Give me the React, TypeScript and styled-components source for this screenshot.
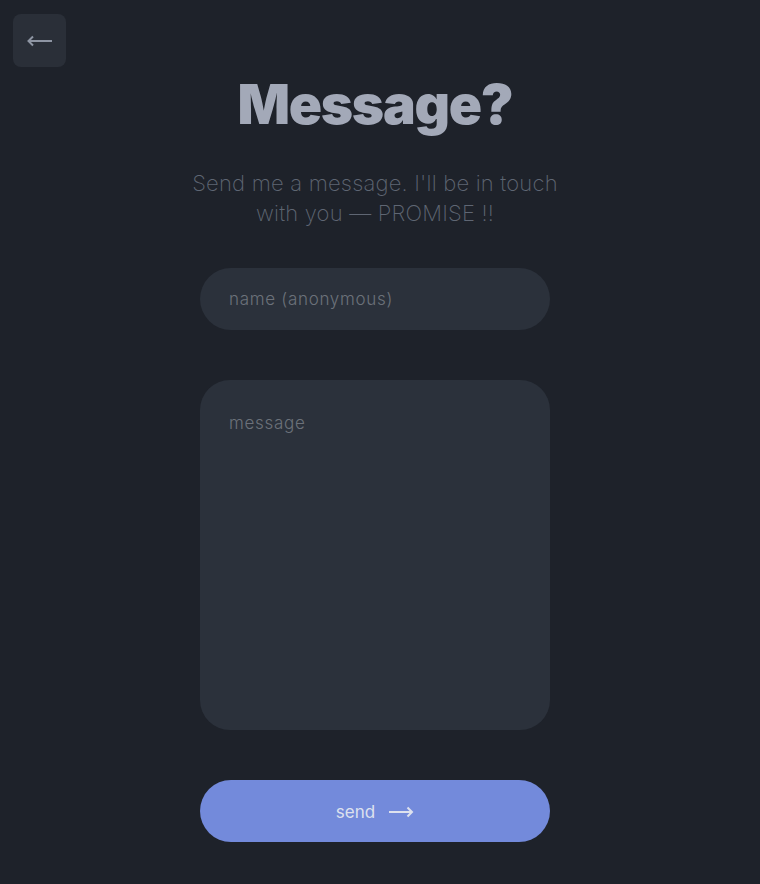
import React from "react";
import styled, { createGlobalStyle } from "styled-components";

const Global = createGlobalStyle`
  html, body { margin: 0; padding: 0; background: #1e222a; }
  body { font-family: Inter, "Noto Sans", sans-serif; }
  * { box-sizing: border-box; }
`;

const Page = styled.div`
  position: relative;
  width: 750px;
  min-height: 884px;
  display: flex;
  flex-direction: column;
  align-items: center;
  padding-top: 70px;
`;

const BackButton = styled.button`
  position: absolute;
  left: 13px;
  top: 14px;
  width: 53px;
  height: 53px;
  border: none;
  border-radius: 8px;
  background: #2a2f38;
  display: flex;
  align-items: center;
  justify-content: center;
  padding: 0;
  cursor: pointer;
`;

const Title = styled.h1`
  margin: 0;
  font-family: Inter, sans-serif;
  font-weight: 900;
  font-size: 55px;
  line-height: 68px;
  letter-spacing: -1.3px;
  color: #a3a9b8;
`;

const Subtitle = styled.p`
  margin: 30px 0 0;
  width: 380px;
  text-align: center;
  font-family: Inter, sans-serif;
  font-weight: 200;
  font-size: 22px;
  line-height: 30px;
  letter-spacing: 0.2px;
  color: #5f6673;
`;

const Form = styled.form`
  margin-top: 40px;
  width: 350px;
  display: flex;
  flex-direction: column;
  gap: 50px;
`;

const NameInput = styled.input`
  height: 62px;
  border: none;
  outline: none;
  border-radius: 31px;
  background: #2b313b;
  padding: 0 29px;
  font-family: Inter, sans-serif;
  font-size: 17px;
  font-weight: 300;
  letter-spacing: 0.7px;
  color: #c0c4cc;
  &::placeholder { color: #6c717a; }
`;

const MessageArea = styled.textarea`
  height: 350px;
  border: none;
  outline: none;
  resize: none;
  border-radius: 30px;
  background: #2b313b;
  padding: 31px 29px;
  font-family: Inter, sans-serif;
  font-size: 17px;
  font-weight: 300;
  letter-spacing: 0.7px;
  line-height: 24px;
  color: #c0c4cc;
  &::placeholder { color: #6c717a; }
`;

const SendButton = styled.button`
  height: 62px;
  border: none;
  border-radius: 31px;
  background: #738adb;
  display: flex;
  align-items: center;
  justify-content: center;
  gap: 13px;
  font-family: Inter, sans-serif;
  font-size: 17px;
  font-weight: 400;
  color: #dde1ee;
  cursor: pointer;
  padding: 2px 0 0;
`;

export default function App() {
  return (
    <>
      <Global />
      <Page>
        <BackButton aria-label="back">
          <svg width="26" height="12" viewBox="0 0 26 12" fill="none">
            <path d="M25 6H2M6 1.5L1.5 6L6 10.5" stroke="#8e95a3" strokeWidth="2" />
          </svg>
        </BackButton>
        <Title>Message?</Title>
        <Subtitle>Send me a message. I'll be in touch with you — PROMISE !!</Subtitle>
        <Form onSubmit={(e) => e.preventDefault()}>
          <NameInput placeholder="name (anonymous)" />
          <MessageArea placeholder="message" />
          <SendButton type="submit">
            send
            <svg width="26" height="12" viewBox="0 0 26 12" fill="none">
              <path d="M1 6H24M19.5 1.5L24 6L19.5 10.5" stroke="#dde1ee" strokeWidth="2" />
            </svg>
          </SendButton>
        </Form>
      </Page>
    </>
  );
}
